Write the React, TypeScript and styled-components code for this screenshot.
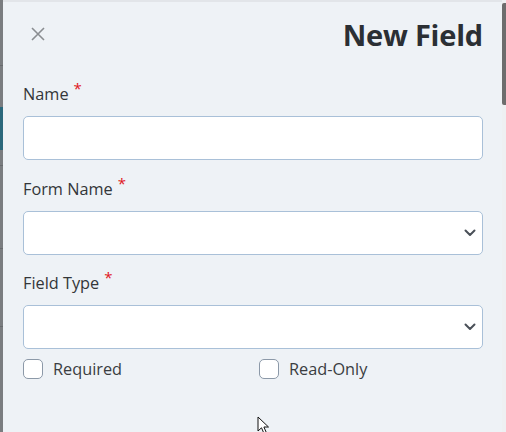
import styled, { createGlobalStyle } from "styled-components";

const GlobalStyle = createGlobalStyle`
  html, body {
    margin: 0;
    padding: 0;
    width: 506px;
    height: 432px;
    overflow: hidden;
    background: #7a7d80;
  }
  * {
    box-sizing: border-box;
  }
`;

interface FieldProps {
  label: string;
  select?: boolean;
}

function Field({ label, select = false }: FieldProps): JSX.Element {
  return (
    <FieldGroup>
      <Label>
        {label}
        <Required>*</Required>
      </Label>
      <InputBox>
        {select && (
          <Chevron viewBox="0 0 12 8">
            <path d="M1.5 1.5 L6 6 L10.5 1.5" fill="none" stroke="#4a5058" strokeWidth="2" strokeLinecap="round" strokeLinejoin="round" />
          </Chevron>
        )}
      </InputBox>
    </FieldGroup>
  );
}

export default function App(): JSX.Element {
  return (
    <Root>
      <GlobalStyle />
      <Backdrop>
        <BackdropLine $top={65} />
        <BackdropBlock />
        <BackdropLine $top={165} />
        <BackdropLine $top={248} />
        <BackdropLine $top={326} />
      </Backdrop>

      <Panel>
        <Header>
          <CloseButton aria-label="Close">
            <svg width="14" height="14" viewBox="0 0 14 14">
              <path d="M1 1 L13 13 M13 1 L1 13" stroke="#8a8d91" strokeWidth="1.6" />
            </svg>
          </CloseButton>
          <Title>New Field</Title>
        </Header>

        <Body>
          <Field label="Name" />
          <Field label="Form Name" select />
          <Field label="Field Type" select />

          <Checks>
            <CheckItem>
              <CheckBox />
              Required
            </CheckItem>
            <CheckItem>
              <CheckBox />
              Read-Only
            </CheckItem>
          </Checks>
        </Body>

        <Cursor width="14" height="20" viewBox="0 0 14 20">
          <path d="M1 1 L1 15 L4.5 11.8 L7 17.5 L9.3 16.5 L6.9 11 L11.5 11 Z" fill="#fff" stroke="#111" strokeWidth="1" strokeLinejoin="round" />
        </Cursor>
      </Panel>

      <Scrollbar>
        <Thumb />
      </Scrollbar>
    </Root>
  );
}

const Root = styled.div`
  display: flex;
  width: 506px;
  height: 432px;
  font-family: "Open Sans", "Noto Sans", sans-serif;
`;

const Backdrop = styled.div`
  position: relative;
  width: 3px;
  flex-shrink: 0;
  background: #7a7d80;
`;

const BackdropLine = styled.div<{ $top: number }>`
  position: absolute;
  left: 0;
  right: 0;
  top: ${({ $top }) => $top}px;
  height: 1px;
  background: #686b6e;
`;

const BackdropBlock = styled.div`
  position: absolute;
  left: 0;
  right: 0;
  top: 107px;
  height: 43px;
  background: #2b687c;
`;

const Panel = styled.div`
  position: relative;
  flex: 1;
  display: flex;
  flex-direction: column;
  background: #eef2f6;
  border-top: 2px solid #e2e5e9;
`;

const Header = styled.div`
  display: flex;
  align-items: center;
  justify-content: space-between;
  height: 80px;
  padding: 0 19px 16px 28px;
`;

const CloseButton = styled.button`
  display: flex;
  align-items: center;
  justify-content: center;
  padding: 0;
  border: none;
  background: none;
  cursor: pointer;
`;

const Title = styled.h1`
  margin: 0;
  font-size: 29px;
  font-weight: 700;
  color: #2b2f34;
  letter-spacing: -0.2px;
`;

const Body = styled.div`
  display: flex;
  flex-direction: column;
  gap: 16.5px;
  padding: 0 19px 0 20px;
`;

const FieldGroup = styled.div`
  display: flex;
  flex-direction: column;
`;

const Label = styled.label`
  display: flex;
  align-items: flex-start;
  height: 24px;
  margin-bottom: 10px;
  font-size: 16.3px;
  line-height: 24px;
  color: #333639;
`;

const Required = styled.span`
  margin-left: 5px;
  font-size: 15px;
  line-height: 12px;
  color: #e0161c;
`;

const InputBox = styled.div`
  position: relative;
  display: flex;
  align-items: center;
  justify-content: flex-end;
  height: 44px;
  padding-right: 6px;
  background: #fff;
  border: 1px solid #a9c0d8;
  border-radius: 5px;
`;

const Chevron = styled.svg`
  width: 12px;
  height: 8px;
`;

const Checks = styled.div`
  display: grid;
  grid-template-columns: 236px 1fr;
  margin-top: -8px;
`;

const CheckItem = styled.label`
  display: flex;
  align-items: center;
  gap: 10px;
  height: 22px;
  font-size: 16.3px;
  color: #3a3d41;
`;

const CheckBox = styled.span`
  width: 20px;
  height: 20px;
  background: #fff;
  border: 1px solid #8c99a8;
  border-radius: 5px;
`;

const Cursor = styled.svg`
  position: absolute;
  left: 254px;
  top: 414px;
`;

const Scrollbar = styled.div`
  width: 4px;
  flex-shrink: 0;
  padding-top: 3px;
  background: #eef0f2;
`;

const Thumb = styled.div`
  height: 102px;
  background: #6d6d6d;
  border-radius: 2px 0 0 2px;
`;
